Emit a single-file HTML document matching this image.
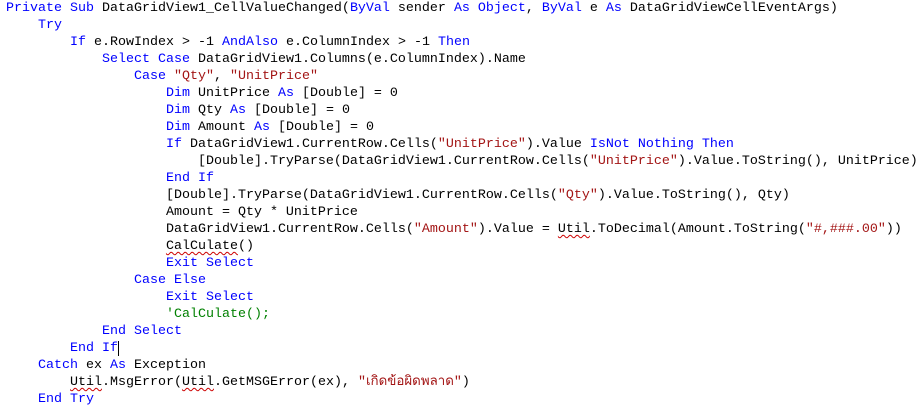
<!DOCTYPE html>
<html><head><meta charset="utf-8"><style>
html,body{margin:0;padding:0;background:#fff;width:921px;height:407px;overflow:hidden}
pre{margin:0;position:absolute;left:6px;top:0;font-family:"Liberation Mono","DejaVu Sans Mono",monospace;font-size:13.33px;line-height:17px;color:#000}
.k{color:#0000ff}.s{color:#a31515}.c{color:#008000}
.w{text-decoration:underline wavy #c00;text-decoration-thickness:1px;text-underline-offset:2px}
.cur{border-right:1px solid #000}
</style></head><body>
<pre><span class="k">Private Sub</span> DataGridView1_CellValueChanged(<span class="k">ByVal</span> sender <span class="k">As Object</span>, <span class="k">ByVal</span> e <span class="k">As</span> DataGridViewCellEventArgs)
    <span class="k">Try</span>
        <span class="k">If</span> e.RowIndex &gt; -1 <span class="k">AndAlso</span> e.ColumnIndex &gt; -1 <span class="k">Then</span>
            <span class="k">Select Case</span> DataGridView1.Columns(e.ColumnIndex).Name
                <span class="k">Case</span> <span class="s">"Qty"</span>, <span class="s">"UnitPrice"</span>
                    <span class="k">Dim</span> UnitPrice <span class="k">As</span> [Double] = 0
                    <span class="k">Dim</span> Qty <span class="k">As</span> [Double] = 0
                    <span class="k">Dim</span> Amount <span class="k">As</span> [Double] = 0
                    <span class="k">If</span> DataGridView1.CurrentRow.Cells(<span class="s">"UnitPrice"</span>).Value <span class="k">IsNot Nothing Then</span>
                        [Double].TryParse(DataGridView1.CurrentRow.Cells(<span class="s">"UnitPrice"</span>).Value.ToString(), UnitPrice)
                    <span class="k">End If</span>
                    [Double].TryParse(DataGridView1.CurrentRow.Cells(<span class="s">"Qty"</span>).Value.ToString(), Qty)
                    Amount = Qty * UnitPrice
                    DataGridView1.CurrentRow.Cells(<span class="s">"Amount"</span>).Value = <span class="w">Util</span>.ToDecimal(Amount.ToString(<span class="s">"#,###.00"</span>))
                    <span class="w">CalCulate</span>()
                    <span class="k">Exit Select</span>
                <span class="k">Case Else</span>
                    <span class="k">Exit Select</span>
                    <span class="c">'CalCulate();</span>
            <span class="k">End Select</span>
        <span class="k"><span class="cur">End If</span></span>
    <span class="k">Catch</span> ex <span class="k">As</span> Exception
        <span class="w">Util</span>.MsgError(<span class="w">Util</span>.GetMSGError(ex), <span class="s">"เกิดข้อผิดพลาด"</span>)
    <span class="k">End Try</span></pre>
</body></html>
